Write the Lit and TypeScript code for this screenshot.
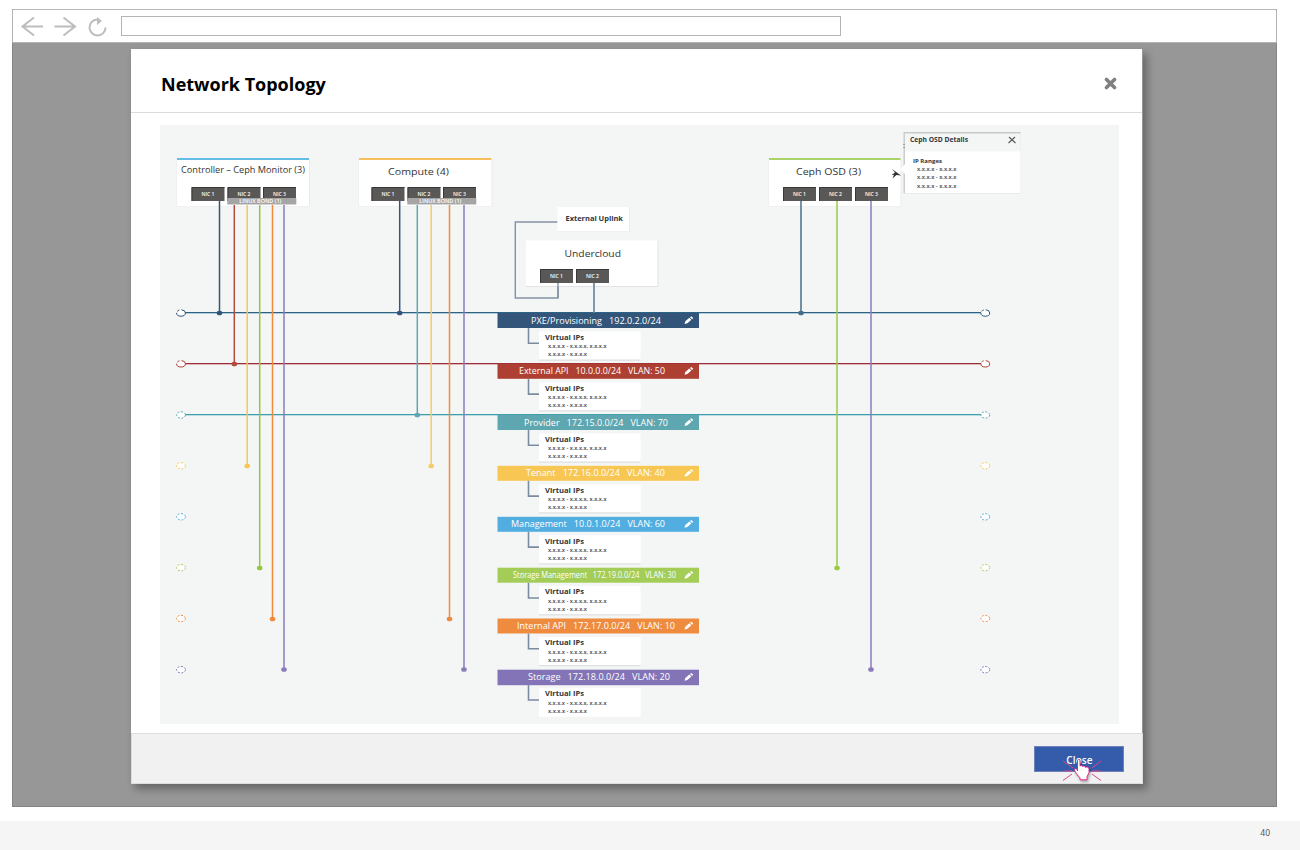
import { LitElement, html, svg, css } from "lit";
import { customElement } from "lit/decorators.js";

interface Network { name: string; x: number; w: number; color: string; line?: string; y: number; }

const networks: Network[] = [
  { name: "PXE/Provisioning   192.0.2.0/24", x: 531, w: 130, color: "#33557a", line: "#2b6387", y: 313 },
  { name: "External API   10.0.0.0/24   VLAN: 50", x: 519, w: 146, color: "#ae4033", line: "#9f2c36", y: 363.8 },
  { name: "Provider   172.15.0.0/24   VLAN: 70", x: 524, w: 144, color: "#5ea6b0", line: "#409eac", y: 415 },
  { name: "Tenant   172.16.0.0/24   VLAN: 40", x: 526, w: 139, color: "#f7c653", y: 465.8 },
  { name: "Management   10.0.1.0/24   VLAN: 60", x: 511, w: 154, color: "#52ade1", y: 516.8 },
  { name: "Storage Management   172.19.0.0/24   VLAN: 30", x: 513, w: 163, color: "#a3cd56", y: 567.7 },
  { name: "Internal API   172.17.0.0/24   VLAN: 10", x: 517, w: 158, color: "#ee8b3f", y: 618.5 },
  { name: "Storage   172.18.0.0/24   VLAN: 20", x: 528, w: 142, color: "#8274b6", y: 669.7 },
];

const drops = [
  [219.5, 201, 313, "#33557a"], [234.3, 205, 364, "#b34a3c"], [247.2, 205, 466, "#f7c653"],
  [259.7, 205, 568, "#93c83e"], [272.5, 205, 619, "#ee8b3f"], [284, 205, 669.5, "#8b7dba"],
  [399.7, 201, 313, "#33557a"], [417.3, 205, 415, "#5ea6b0"], [431.2, 205, 466, "#f4cc69"],
  [449.5, 205, 619, "#ee8b3f"], [464, 205, 669.5, "#8b7dba"],
  [801, 201, 313, "#486d8b"], [837, 201, 568, "#9acb47"], [871, 201, 669.5, "#8b7dba"],
] as const;

const label = (s: string, x: number, y: number, w: number, size: number, cls = "") =>
  svg`<text class=${cls} x=${x} y=${y} font-size=${size} textLength=${w} lengthAdjust="spacingAndGlyphs">${s}</text>`;

const nic = (n: number, x: number, y = 187) => svg`
  <rect x=${x} y=${y} width="33" height="14" fill="#595856"/>
  <path d="M${x + 0.5} ${y + 14}V${y + 0.5}H${x + 33}" fill="none" stroke="#383838"/>
  ${label(`NIC ${n}`, x + 10, y + 9, 13, 5, "nic")}`;

@customElement("topology-diagram")
export class TopologyDiagram extends LitElement {
  static styles = css`
    :host { display: block; }
    svg { display: block; width: 959px; height: 599px; }
    text { font-family: "Open Sans", sans-serif; fill: #333; white-space: pre; }
    .bold { font-weight: 700; fill: #30363e; }
    .nic { font-weight: 600; fill: #fff; }
    .light { fill: #fff; }
    .tiny { font-weight: 600; fill: #3f444b; }
  `;

  private role(x: number, w: number, color: string) {
    return svg`<rect x=${x - 0.5} y="159" width=${w + 1.5} height="47.500" fill="#e9ebeb"/>
      <rect x=${x} y="158" width=${w} height="48" fill="#fff"/>
      <rect x=${x} y="158" width=${w} height="2" fill=${color}/>`;
  }

  private bond(x: number) {
    return svg`<rect x=${x} y="198" width="69" height="6.5" fill="#a5a5a5"/>
      ${label("LINUX BOND (1)", x + 12, 203, 42, 5, "nic")}`;
  }

  private network(n: Network, i: number) {
    const y = n.y;
    const last = i === 7;
    return svg`
      <rect x="497.5" y=${y} width="201.5" height=${last ? 15.5 : 15} fill=${n.color}/>
      ${label(n.name, n.x, y + 10.5, n.w, 8.5, "light")}
      <path d="M684.5 ${y + 11}l.8-2.7 4-3.5 2.1 2-4 3.5zM690 ${y + 4.3}l1.2-1.1 2.1 1.8-1.2 1.2z" fill="#fff"/>
      <path d="M528.5 ${y + 15}V${y + 30.3}H539" fill="none" stroke="#7c8ca0" stroke-width="1.6"/>
      <rect x="539" y=${y + 18.5} width="101.5" height="28.5" fill="#fff"/>
      ${last ? null : svg`<rect x="539" y=${y + 46.5} width="101.5" height="1.2" fill="#dedfdf"/>`}
      ${label("Virtual IPs", 545, y + 26.7, 39, 7.5, "bold")}
      ${label("x.x.x.x - x.x.x.x, x.x.x.x", 548, y + 35.2, 58.5, 5.3, "tiny")}
      ${label("x.x.x.x - x.x.x.x", 548, y + 43.2, 39, 5.3, "tiny")}`;
  }

  render() {
    return html`<svg viewBox="160 125 959 599">
      <rect x="160" y="125" width="959" height="599" fill="#f4f6f6"/>
      ${networks.map(n => svg`
        ${n.line ? svg`<rect x="184" y=${Math.round(n.y) - 1} width="798" height="1.3" fill=${n.line}/>` : null}
        ${[181, 985.3].map(x => svg`<ellipse cx=${x} cy=${n.y} rx="4.4" ry="3.2" fill="#fff"
          stroke=${n.color} stroke-width="1" stroke-dasharray=${n.line && n.y < 400 ? "12 1.5 2.5 2" : "2 1.5"}/>`)}`)}
      ${this.role(177, 132, "#65bce4")}
      ${this.role(359, 132.5, "#f6c15c")}
      ${this.role(769, 131.5, "#a9d26b")}
      ${label("Controller – Ceph Monitor (3)", 181, 172.5, 124, 9)}
      ${label("Compute (4)", 388, 174.5, 61, 9.5)}
      ${label("Ceph OSD (3)", 796, 174.5, 65, 9.5)}
      ${nic(1, 191.5)}${nic(2, 227.5)}${nic(3, 263)}
      ${nic(1, 371.5)}${nic(2, 407.5)}${nic(3, 443)}
      ${nic(1, 783)}${nic(2, 819)}${nic(3, 855)}
      ${this.bond(227.3)}${this.bond(407.3)}
      ${drops.map(([x, a, b, c]) => svg`<path d="M${x} ${a}V${b}" stroke=${c} stroke-width="1.5"/>
        <ellipse cx=${x} cy=${b} rx="2.8" ry="2.300" fill=${c}/>`)}

      <path d="M558 222H515.3V298H558V282" fill="none" stroke="#8292a5" stroke-width="1.4"/>
      <rect x="557.5" y="207" width="72.5" height="24.5" fill="#ebeded"/>
      <rect x="557.5" y="207" width="71.5" height="24" fill="#fff"/>
      ${label("External Uplink", 565.5, 221, 57.5, 7.5, "bold")}
      <rect x="526" y="241" width="132.5" height="46" fill="#e1e2e4"/>
      <rect x="526" y="240.5" width="131.5" height="45.5" fill="#fff"/>
      ${label("Undercloud", 564.5, 257, 56.5, 9.5)}
      ${nic(1, 540, 269)}${nic(2, 576, 269)}
      <path d="M558 283V298" stroke="#8292a5" stroke-width="1.4"/>
      <path d="M594 283V313" stroke="#62809e" stroke-width="1.6"/>

      ${networks.map((n, i) => this.network(n, i))}

      <rect x="904" y="132.5" width="117" height="61.5" fill="#e9eaea"/>
      <rect x="905" y="134" width="115.5" height="18" fill="#f4f6f6"/>
      <rect x="905" y="151.5" width="115.5" height="41.5" fill="#fff"/>
      <path d="M904.2 193V132.7H1020.5" fill="none" stroke="#c7c8c8" stroke-width="1.3"/>
      <path d="M905 164L900.5 169.5L905 174z" fill="#fff"/>
      <path d="M903 144.5h2M903 147.5h2" stroke="#888" stroke-width=".7"/>
      ${label("Ceph OSD Details", 910, 142, 58, 7, "bold")}
      <path d="M1009 137l6.5 6M1015 137l-6.5 6" stroke="#555" stroke-width="1.1"/>
      ${label("IP Ranges", 913, 162.5, 29, 6, "bold")}
      ${[170.5, 179, 187.5].map(y => label("x.x.x.x - x.x.x.x", 917, y, 39.5, 5.3, "tiny"))}
      <path d="M892 169l9 6.5-4.500-.5-4 3.500 1.500-3.800-2.500.2 3.500-2.400z" fill="#333"/>
    </svg>`;
  }
}

@customElement("app-root")
export class AppRoot extends LitElement {
  static styles = css`
    :host { display: flex; flex-direction: column; width: 1300px; height: 850px; overflow: hidden; background: #fff; font-family: "Open Sans", sans-serif; }
    * { box-sizing: border-box; }
    svg { display: block; }
    .browser { display: flex; flex-direction: column; width: 1265px; height: 798px; margin: 9px 0 14px 12px; border: 1px solid #848484; border-top-color: #b9b9b9; background: #979797; flex: none; }
    .bar { display: flex; align-items: flex-start; height: 33px; background: #fff; border: 1px solid #b4b4b4; border-top: 0; padding-left: 7px; flex: none; margin: 0 -1px; }
    .url { width: 720px; height: 20px; margin: 6px 0 0 11px; border: 1px solid #b4b4b4; }
    .modal { display: flex; flex-direction: column; width: 1012px; height: 735px; margin: 6px 0 0 118px; box-shadow: 4px 5px 8px rgba(0,0,0,.33); flex: none; }
    .head { display: flex; justify-content: space-between; align-items: flex-start; width: 1011px; height: 64px; background: #fff; border-bottom: 1px solid #dcdcdc; padding: 22px 25px 0 30px; }
    .title { margin: 0; font-size: 18px; line-height: 26px; font-weight: 700; color: #000; white-space: nowrap; }
    .x { margin-top: 6px; }
    .body { width: 1011px; height: 620px; padding: 12px 0 0 29px; background: #fff; }
    .foot { display: flex; justify-content: flex-end; height: 51px; background: #f1f1f1; border: 1px solid #ddd; padding: 12px 18px 0 0; }
    .close { position: relative; width: 90px; height: 26px; padding: 2px 0 0 1px; border: 1px solid #7180b8; background: #345cab; color: #fff; font: 600 10px/22px "Open Sans", sans-serif; letter-spacing: .1px; text-align: center; }
    .hand { position: absolute; left: 26px; top: 11px; overflow: visible; }
    .glove { filter: drop-shadow(1px 2px 1px rgba(0,0,0,.3)); }
    .page { display: flex; justify-content: flex-end; height: 29px; background: #f5f5f5; padding: 6px 30px 0 0; font-family: "Noto Sans", sans-serif; font-size: 8.500px; line-height: 12px; color: #555; }
  `;

  render() {
    return html`
      <div class="browser">
        <div class="bar">
          <svg width="90" height="32" viewBox="20 10 90 32" fill="none" stroke="#bdbdbd" stroke-width="2">
            <path d="M43 26.500H22.500M34 17.500L22.500 26.500L34 35.500M54.500 26.500H75M63.500 17.500L75 26.500L63.500 35.500"/>
            <path d="M97 19.500A8 8 0 1 0 105.500 27.500"/>
            <path d="M97 17l5 4-5 4z" fill="#bdbdbd" stroke="none"/>
          </svg>
          <div class="url"></div>
        </div>
        <div class="modal">
          <div class="head">
            <h1 class="title">Network Topology</h1>
            <svg class="x" width="13" height="13" viewBox="0 0 13 13"><path d="M2.500 2.500l8 8M10.500 2.500l-8 8" stroke="#808080" stroke-width="3.600" stroke-linecap="round"/></svg>
          </div>
          <div class="body"><topology-diagram></topology-diagram></div>
          <div class="foot">
            <button class="close">Close
              <svg class="hand" width="42" height="26" viewBox="1061 758 42 26">
                <path d="M1063 761l10 7M1101 761l-9 7M1063 780.500l9-6.500M1101 780.500l-9-6.500M1063 771h9M1092 771h9" stroke="#d6498e" stroke-width="1" fill="none"/>
                <path class="glove" d="M1077.500 771V761c0-2 2.500-2 2.500 0v5c1-1 2.500-.5 2.500.5 1-1 2.700-.5 2.700.8 1.200-.8 3.800 0 3.800 1.500v4.200l-2 3.500v3.300h-7v-2l-3.500-4-2-3.500c-.5-2 1.500-2.300 3-.3z" fill="#fff" stroke="#e2187d" stroke-width=".9"/>
              </svg>
            </button>
          </div>
        </div>
      </div>
      <div class="page">40</div>`;
  }
}
